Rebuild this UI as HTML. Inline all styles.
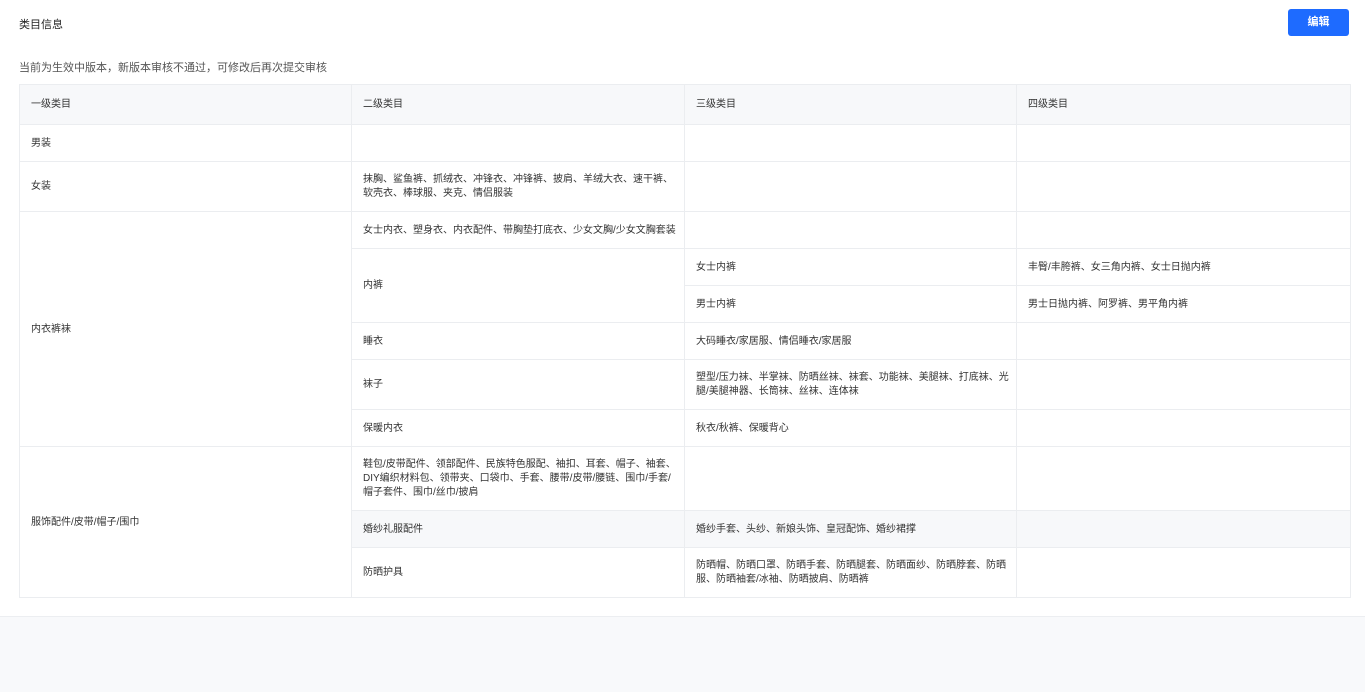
<!DOCTYPE html>
<html><head><meta charset="utf-8"><style>
*{margin:0;padding:0;box-sizing:border-box}
body{width:1365px;height:692px;background:#f8f9fb;font-family:"Liberation Sans","Noto Sans CJK SC",sans-serif;color:#333;overflow:hidden;position:relative}
.card{position:absolute;left:0;top:0;width:1365px;height:617px;background:#fff;border-bottom:1px solid #eceef1}
.title{position:absolute;left:19px;top:16px;font-size:11px;color:#222}
.btn{position:absolute;left:1288px;top:9px;width:61px;height:27px;background:#1e6bff;border-radius:3px;color:#fff;font-size:11px;font-weight:bold;text-align:center;line-height:27px}
.tip{position:absolute;left:19px;top:59px;font-size:11px;color:#555}
table{position:absolute;left:19px;top:84px;width:1331px;border-collapse:collapse;table-layout:fixed;font-size:10px;color:#333}
td{border:1px solid #ebedf0;padding:1px 4px 0 11px;line-height:14px;vertical-align:middle}
tr.h td{background:#f7f8fa;height:40px;color:#333}
.g td{background:#f7f8fa}
.nw{white-space:nowrap}
</style></head><body>
<div class="card"></div>
<div class="title">类目信息</div>
<div class="btn">编辑</div>
<div class="tip">当前为生效中版本，新版本审核不通过，可修改后再次提交审核</div>
<table>
<colgroup><col style="width:332px"><col style="width:333px"><col style="width:332px"><col style="width:334px"></colgroup>
<tr class="h"><td>一级类目</td><td>二级类目</td><td>三级类目</td><td>四级类目</td></tr>
<tr style="height:37px"><td>男装</td><td></td><td></td><td></td></tr>
<tr style="height:50px"><td>女装</td><td>抹胸、鲨鱼裤、抓绒衣、冲锋衣、冲锋裤、披肩、羊绒大衣、速干裤、<br>软壳衣、棒球服、夹克、情侣服装</td><td></td><td></td></tr>
<tr style="height:37px"><td rowspan="6">内衣裤袜</td><td class="nw">女士内衣、塑身衣、内衣配件、带胸垫打底衣、少女文胸/少女文胸套装</td><td></td><td></td></tr>
<tr style="height:37px"><td rowspan="2">内裤</td><td>女士内裤</td><td>丰臀/丰胯裤、女三角内裤、女士日抛内裤</td></tr>
<tr style="height:37px"><td>男士内裤</td><td>男士日抛内裤、阿罗裤、男平角内裤</td></tr>
<tr style="height:37px"><td>睡衣</td><td>大码睡衣/家居服、情侣睡衣/家居服</td><td></td></tr>
<tr style="height:50px"><td>袜子</td><td>塑型/压力袜、半掌袜、防晒丝袜、袜套、功能袜、美腿袜、打底袜、光<br>腿/美腿神器、长筒袜、丝袜、连体袜</td><td></td></tr>
<tr style="height:37px"><td>保暖内衣</td><td>秋衣/秋裤、保暖背心</td><td></td></tr>
<tr style="height:64px"><td rowspan="3">服饰配件/皮带/帽子/围巾</td><td>鞋包/皮带配件、领部配件、民族特色服配、袖扣、耳套、帽子、袖套、<br>DIY编织材料包、领带夹、口袋巾、手套、腰带/皮带/腰链、围巾/手套/<br>帽子套件、围巾/丝巾/披肩</td><td></td><td></td></tr>
<tr style="height:37px" class="g"><td>婚纱礼服配件</td><td>婚纱手套、头纱、新娘头饰、皇冠配饰、婚纱裙撑</td><td></td></tr>
<tr style="height:50px"><td>防晒护具</td><td>防晒帽、防晒口罩、防晒手套、防晒腿套、防晒面纱、防晒脖套、防晒<br>服、防晒袖套/冰袖、防晒披肩、防晒裤</td><td></td></tr>
</table>
</body></html>
